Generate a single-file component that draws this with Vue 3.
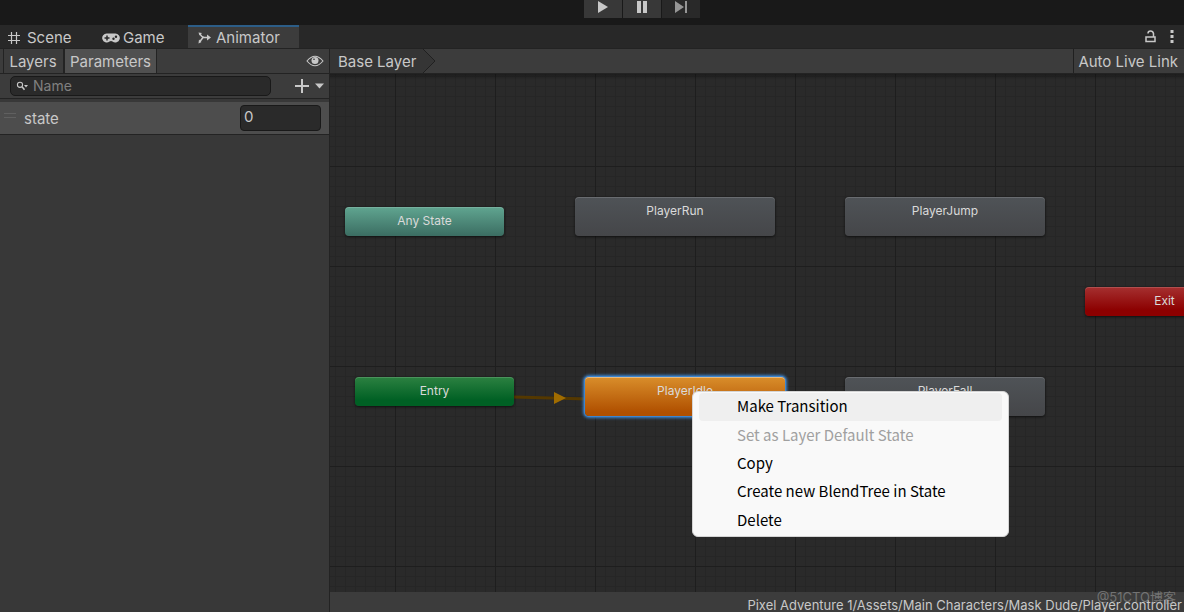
<script setup>
import { ref } from 'vue'

const search = ref('')
const stateValue = ref('0')

const nodes = [
  { id: 'any', label: 'Any State', kind: 'teal', x: 15, y: 133, small: true },
  { id: 'run', label: 'PlayerRun', kind: 'grey', x: 245, y: 123 },
  { id: 'jump', label: 'PlayerJump', kind: 'grey', x: 515, y: 123 },
  { id: 'exit', label: 'Exit', kind: 'red', x: 755, y: 213, small: true },
  { id: 'entry', label: 'Entry', kind: 'green', x: 25, y: 303, small: true },
  { id: 'idle', label: 'PlayerIdle', kind: 'orange', x: 255, y: 303 },
  { id: 'fall', label: 'PlayerFall', kind: 'grey', x: 515, y: 303 },
]

const menu = [
  { label: 'Make Transition', active: true },
  { label: 'Set as Layer Default State', disabled: true },
  { label: 'Copy' },
  { label: 'Create new BlendTree in State' },
  { label: 'Delete' },
]
</script>

<template>
  <div class="editor">
    <header class="playbar">
      <button class="play" aria-label="Play">
        <svg width="12" height="14" viewBox="0 0 12 14"><path d="M1 1v12l10-6z" /></svg>
      </button>
      <button class="play" aria-label="Pause">
        <svg width="12" height="14" viewBox="0 0 12 14"><path d="M1 1h4v12H1zM7 1h4v12H7z" /></svg>
      </button>
      <button class="play dim" aria-label="Step">
        <svg width="14" height="14" viewBox="0 0 14 14"><path d="M1 1v12l9-6zM11 1h2v12h-2z" /></svg>
      </button>
    </header>

    <nav class="tabs">
      <button class="tab scene">
        <svg width="14" height="14" viewBox="0 0 14 14"><path class="hash" d="M4.500 1v12M9.500 1v12M1 4.500h12M1 9.500h12" /></svg>
        Scene
      </button>
      <button class="tab game">
        <svg width="18" height="10" viewBox="0 0 18 10">
          <path d="M5 .5h8a4.500 4.500 0 1 1-2.500 8Q9 7.500 7.500 8.500A4.500 4.500 0 1 1 5 .5z" />
          <path class="cut" d="M5 2.500v5M2.500 5h5" />
          <circle class="hole" cx="11.500" cy="5.800" r="1.200" /><circle class="hole" cx="14" cy="3.800" r="1.200" />
        </svg>
        Game
      </button>
      <button class="tab animator">
        <svg width="14" height="12" viewBox="0 0 14 12">
          <path class="thin" d="M2 2Q4 5.500 6.500 5.500H11M1.500 10L5 5.500" />
          <path d="M9 2.500l4 3-4 3z" /><path d="M.5.5l3.500.5-2.500 2.500zM.5 11.500l.5-4 2.500 2.500z" />
        </svg>
        Animator
      </button>
      <span class="spacer"></span>
      <button class="icon" aria-label="Lock">
        <svg width="11" height="13" viewBox="0 0 11 13">
          <path class="thin" d="M1 7h9v4.500H1zM3 3.500Q3 1 5.500 1T8.500 3.500V7" />
        </svg>
      </button>
      <button class="icon" aria-label="More">
        <svg width="4" height="13" viewBox="0 0 4 13"><path d="M.5 0h3v3h-3zM.5 5h3v3h-3zM.5 10h3v3h-3z" /></svg>
      </button>
    </nav>

    <div class="body">
      <aside class="side">
        <div class="bar">
          <button class="mode layers">Layers</button>
          <button class="mode on">Parameters</button>
          <span class="spacer"></span>
          <button class="icon eye" aria-label="Toggle panel">
            <svg width="18" height="12" viewBox="0 0 18 12">
              <path class="eyeline" d="M1 6Q9-3.500 17 6 9 15.500 1 6z" /><circle cx="9" cy="5.500" r="3.500" />
              <circle class="hole" cx="8" cy="4.300" r=".8" />
            </svg>
          </button>
        </div>
        <div class="find">
          <label class="search">
            <svg width="12" height="10" viewBox="0 0 12 10">
              <circle class="eyeline" cx="4" cy="3.800" r="2.600" /><path class="thin" d="M6 5.800L8.500 8.800" /><path d="M8 4h4l-2 2.400z" />
            </svg>
            <input v-model="search" placeholder="Name" aria-label="Search parameters" />
          </label>
          <button class="icon add" aria-label="Add parameter">
            <svg width="30" height="14" viewBox="0 0 30 14"><path class="line" d="M8 0v14M1 7h14" /><path d="M21 4.500h9l-4.500 5z" /></svg>
          </button>
        </div>
        <div class="param">
          <span class="grip"></span>
          <label for="state-value">state</label>
          <input id="state-value" v-model="stateValue" />
        </div>
      </aside>

      <main class="graph">
        <div class="bar crumbs">
          <button class="crumb">
            Base Layer
            <svg width="13" height="24" viewBox="0 0 13 24"><path class="fill" d="M0 0l12 12L0 24z" /><path class="edge" d="M0 0l12 12L0 24" /></svg>
          </button>
          <span class="spacer"></span>
          <button class="live">Auto Live Link</button>
        </div>

        <div class="canvas">
          <svg class="link" width="74" height="14" viewBox="0 0 74 14">
            <path class="wire" d="M0 6l74 2" /><path class="arrow" d="M40 1v12l12-6z" />
          </svg>
          <div
            v-for="n in nodes"
            :key="n.id"
            class="node"
            :class="[n.kind, { small: n.small }]"
            :style="{ left: n.x + 'px', top: n.y + 'px' }"
          >{{ n.label }}</div>

          <div class="menu" role="menu">
            <button
              v-for="m in menu"
              :key="m.label"
              role="menuitem"
              :class="{ active: m.active }"
              :disabled="m.disabled"
            >{{ m.label }}</button>
          </div>
        </div>

        <footer class="status">
          Pixel Adventure 1/Assets/Main Characters/Mask Dude/Player.controller
          <span class="mark">@51CTO博客</span>
        </footer>
      </main>
    </div>
  </div>
</template>

<style>
body { margin: 0; background: #191919; }
</style>

<style scoped>
* { box-sizing: border-box; }
.editor {
  display: flex; flex-direction: column; height: 100vh; overflow: hidden;
  background: #191919; color: #c8c8c8;
  font-family: Inter, "Noto Sans CJK SC", sans-serif; font-size: 15px; line-height: 20px;
}
button { border: 0; padding: 0; margin: 0; background: none; color: inherit; font: inherit; white-space: nowrap; }
input { font: inherit; color: inherit; border: 0; outline: 0; background: none; padding: 0; min-width: 0; }
svg { display: block; flex: none; fill: #c8c8c8; }
.line { fill: none; stroke: #c8c8c8; stroke-width: 2; }
.thin { fill: none; stroke: #c8c8c8; stroke-width: 1.5; }
.hash { fill: none; stroke: #c8c8c8; stroke-width: 1.2; }
.eyeline { fill: none; stroke: #c8c8c8; stroke-width: 1.1; }
.cut { stroke: #282828; stroke-width: 1.5; }
.hole { fill: #282828; }
.spacer { flex: 1; }

.playbar { display: flex; justify-content: center; gap: 1px; height: 25px; padding-left: 100px; flex: none; }
.play { display: flex; justify-content: center; width: 38px; height: 18px; background: #383838; }
.play.dim { background: #292929; }
.play.dim svg { fill: #969696; }

.tabs { display: flex; align-items: stretch; height: 23px; flex: none; background: #282828; padding-right: 10px; }
.tab { display: flex; align-items: center; gap: 6px; padding-top: 2px; }
.tab.scene { padding-left: 7px; width: 102px; }
.tab.game { width: 86px; gap: 3px; }
.tab.animator { width: 111px; gap: 4px; padding-left: 10px; padding-top: 1px; background: #3c3c3c; border-top: 2px solid #2c5d87; }
.icon { display: flex; align-items: center; }
.tabs .icon { margin-left: 14px; }

.body { display: flex; flex: 1; min-height: 0; }
.side { width: 330px; flex: none; background: #383838; border-right: 1px solid #232323; }
.bar { display: flex; height: 26px; flex: none; background: #3c3c3c; border-top: 1px solid #232323; border-bottom: 1px solid #232323; }
.mode { border-right: 1px solid #232323; padding: 1px 5px 0 5px; border-left: 1px solid #232323; }
.mode.layers { margin-left: 3px; width: 61px; padding-left: 4px; }
.mode.on { background: #505050; width: 93px; }
.eye { margin-right: 5px; }
.find { display: flex; align-items: center; height: 25px; padding: 0 5px 0 10px; background: #3c3c3c; border-bottom: 1px solid #232323; }
.search {
  display: flex; align-items: center; gap: 5px; width: 261px; height: 20px; padding-left: 5px;
  background: #2a2a2a; border: 1px solid #191919; border-radius: 5px;
}
.search input { flex: 1; font-size: 14px; }
.search input::placeholder { color: #808080; opacity: 1; }
.add { margin-left: auto; }
.param {
  display: flex; align-items: center; height: 33px; margin-top: 3px; padding-right: 8px;
  background: #4d4d4d; border-bottom: 1px solid #232323;
}
.grip { width: 12px; height: 5px; margin: 0 8px 6px 4px; border-top: 1px solid #606060; border-bottom: 1px solid #606060; }
.param label { flex: 1; padding-top: 2px; }
.param input { width: 81px; height: 26px; padding: 0 3px 3px; background: #2a2a2a; border: 1px solid #191919; border-radius: 4px; }

.graph { display: flex; flex-direction: column; flex: 1; min-width: 0; }
.crumb { display: flex; align-items: center; padding: 1px 7px 0 8px; background: #353535; position: relative; }
.crumb svg { position: absolute; left: 100%; top: 0; }
.fill { fill: #353535; }
.edge { fill: none; stroke: #202020; stroke-width: 1; }
.live { padding: 1px 6px 0 4px; border-left: 1px solid #202020; }

.canvas {
  position: relative; flex: 1; overflow: hidden;
  background-color: #2a2a2a;
  background-image:
    linear-gradient(to bottom, rgba(0, 0, 0, 0.3), transparent 6px),
    linear-gradient(to right, #1e1e1e 1px, transparent 1px),
    linear-gradient(to bottom, #1e1e1e 1px, transparent 1px),
    linear-gradient(to right, #262626 1px, transparent 1px),
    linear-gradient(to bottom, #262626 1px, transparent 1px);
  background-size: 100% 100%, 100px 100px, 100px 100px, 10px 10px, 10px 10px;
  background-position: 0 0, 65px 0, 0 92px, 5px 0, 0 2px;
}
.node {
  position: absolute; width: 200px; height: 39px; padding-top: 4px; border-radius: 4px;
  text-align: center; font-size: 12px; color: #dadada;
  box-shadow: 0 1px 3px rgba(0, 0, 0, 0.6), inset 0 1px 0 rgba(255, 255, 255, 0.15);
}
.node.small { width: 159px; height: 29px; }
.grey { background: linear-gradient(#4f5357, #454649); }
.teal { background: linear-gradient(#60a590, #3b6d62); }
.red { background: linear-gradient(#a53030, #8c0000 80%); }
.green { background: linear-gradient(#2c8141, #006024 80%); }
.orange {
  background: linear-gradient(#d98e2b, #b05000 90%);
  box-shadow: 0 0 0 1px #3d85cf, 0 0 3px 2px #3d85cf, inset 0 1px 0 rgba(255, 255, 255, 0.4);
}
.link { position: absolute; left: 184px; top: 317px; }
.wire { stroke: #543800; stroke-width: 3; }
.arrow { fill: #a06c00; }

.menu {
  position: absolute; left: 362px; top: 317px; width: 317px; min-height: 146px; padding: 1px 6px;
  display: flex; flex-direction: column; background: #f9f9f9; border: 1px solid #d4d4d4; border-radius: 6px;
}
.menu button {
  flex: 1; min-height: 28px; padding: 0 0 2px 38px; border-radius: 4px; text-align: left;
  font-family: "Noto Sans CJK SC", sans-serif; font-size: 15px; color: #000;
}
.menu .active { background: #efefef; }
.menu button:disabled { color: #a0a0a0; }

.status {
  position: relative; height: 20px; flex: none; padding: 4px 2px 0 0; background: #3c3c3c;
  text-align: right; font-size: 13px; line-height: 18px; white-space: nowrap;
}
.mark { position: absolute; right: 8px; top: -4px; font-size: 13px; color: rgba(170, 170, 170, 0.5); }
</style>
